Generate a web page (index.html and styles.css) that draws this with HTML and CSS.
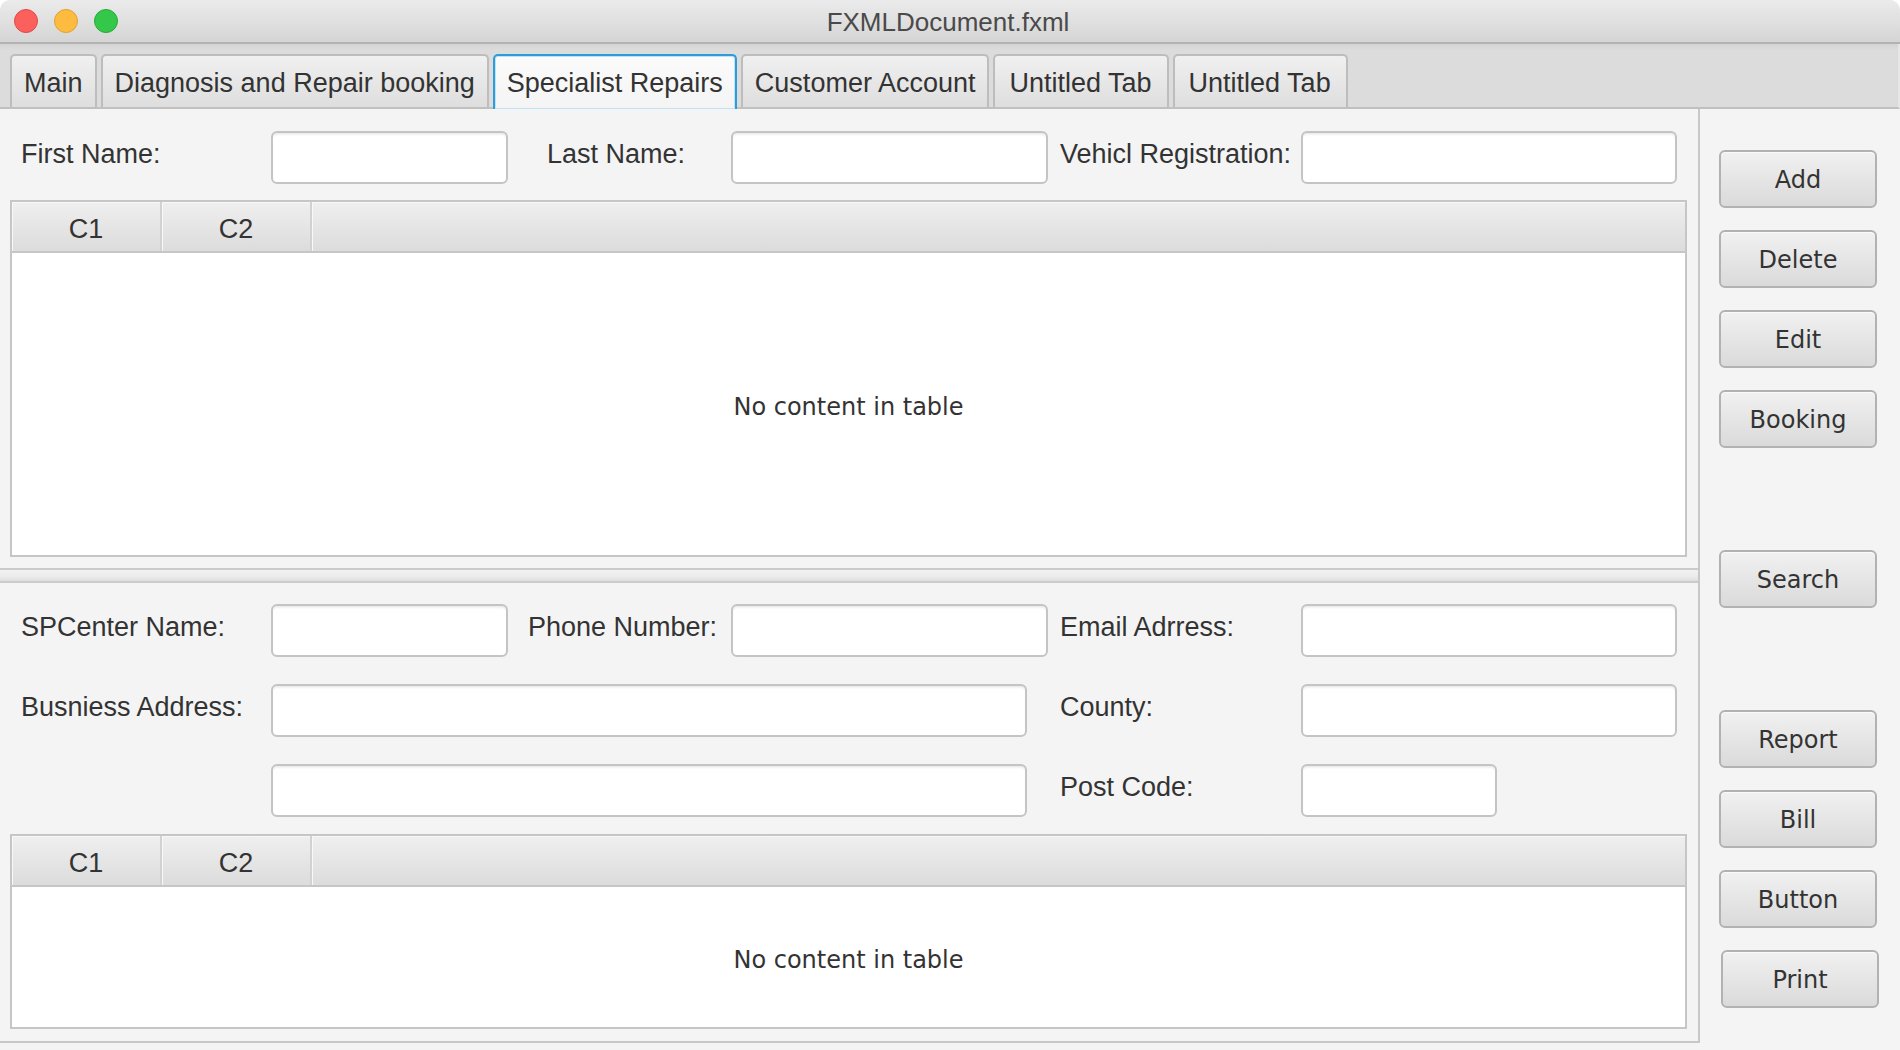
FILE: index.html
```
<!DOCTYPE html>
<html>
<head>
<meta charset="utf-8">
<title>FXMLDocument.fxml</title>
<link rel="stylesheet" href="styles.css">
</head>
<body>
<div class="window">
  <div class="titlebar">
    <div class="lights">
      <span class="light red"></span>
      <span class="light yellow"></span>
      <span class="light green"></span>
    </div>
    <div class="title">FXMLDocument.fxml</div>
  </div>
  <div class="tabbar">
    <div class="tab">Main</div>
    <div class="tab">Diagnosis and Repair booking</div>
    <div class="tab selected">Specialist Repairs</div>
    <div class="tab">Customer Account</div>
    <div class="tab tab-wide">Untitled Tab</div>
    <div class="tab tab-wide">Untitled Tab</div>
  </div>
  <div class="content">
    <div class="main-pane">
      <div class="pane top-pane">
        <div class="form">
          <label class="lbl">First Name:</label>
          <div class="field"></div>
          <label class="lbl lbl-last">Last Name:</label>
          <div class="field"></div>
          <label class="lbl lbl-right">Vehicl Registration:</label>
          <div class="field"></div>
        </div>
        <div class="table table-top">
          <div class="thead">
            <div class="th">C1</div>
            <div class="th">C2</div>
            <div class="th th-fill"></div>
          </div>
          <div class="tbody">No content in table</div>
        </div>
      </div>
      <div class="splitter"></div>
      <div class="pane bottom-pane">
        <div class="form">
          <label class="lbl">SPCenter Name:</label>
          <div class="field"></div>
          <label class="lbl lbl-phone">Phone Number:</label>
          <div class="field"></div>
          <label class="lbl lbl-right">Email Adrress:</label>
          <div class="field"></div>

          <label class="lbl">Busniess Address:</label>
          <div class="field field-address"></div>
          <label class="lbl lbl-right">County:</label>
          <div class="field"></div>

          <div class="field field-address field-address2"></div>
          <label class="lbl lbl-right">Post Code:</label>
          <div class="field field-post"></div>
        </div>
        <div class="table table-bottom">
          <div class="thead">
            <div class="th">C1</div>
            <div class="th">C2</div>
            <div class="th th-fill"></div>
          </div>
          <div class="tbody">No content in table</div>
        </div>
      </div>
    </div>
    <div class="side">
      <button class="btn">Add</button>
      <button class="btn">Delete</button>
      <button class="btn">Edit</button>
      <button class="btn">Booking</button>
      <button class="btn btn-gap">Search</button>
      <button class="btn btn-gap">Report</button>
      <button class="btn">Bill</button>
      <button class="btn">Button</button>
      <button class="btn btn-print">Print</button>
    </div>
  </div>
</div>
</body>
</html>
```

FILE: styles.css
```
* {
  box-sizing: border-box;
}

html, body {
  margin: 0;
  padding: 0;
  background: #ffffff;
}

body {
  width: 1900px;
  height: 1050px;
  overflow: hidden;
  font-family: "Liberation Sans", Arial, sans-serif;
  color: #333333;
}

.window {
  width: 1900px;
  height: 1050px;
  background: #f4f4f4;
  border-radius: 10px 10px 0 0;
  overflow: hidden;
  display: flex;
  flex-direction: column;
}

/* Title bar */
.titlebar {
  height: 44px;
  flex: 0 0 44px;
  background: linear-gradient(#ebebeb, #d5d5d5);
  border-bottom: 2px solid #b3b3b3;
  display: flex;
  align-items: center;
  position: relative;
}

.lights {
  display: flex;
  gap: 16px;
  padding-left: 14px;
}

.light {
  width: 24px;
  height: 24px;
  border-radius: 50%;
  display: block;
}

.red {
  background: #fc605c;
  border: 1px solid #de4a45;
}

.yellow {
  background: #fdbc40;
  border: 1px solid #dea236;
}

.green {
  background: #34c84a;
  border: 1px solid #27aa35;
}

.title {
  position: absolute;
  left: 0;
  right: 0;
  top: 2px;
  bottom: 0;
  display: flex;
  align-items: center;
  justify-content: center;
  font-size: 26px;
  color: #4a4a4a;
  padding-right: 4px;
}

/* Tab bar */
.tabbar {
  height: 65px;
  flex: 0 0 65px;
  background: linear-gradient(#d4d4d4, #dcdcdc 6px, #dcdcdc);
  border-bottom: 2px solid #c0c0c0;
  display: flex;
  align-items: flex-end;
  gap: 4px;
  padding-left: 10px;
  border-right: 2px solid #e6e6e6;
}

.tab {
  height: 53px;
  padding: 3px 12px 0;
  border: 2px solid #bdbdbd;
  border-bottom: none;
  border-radius: 5px 5px 0 0;
  background: linear-gradient(#f0f0f0, #dedede);
  font-size: 27px;
  color: #333333;
  display: flex;
  align-items: center;
  white-space: nowrap;
  margin-bottom: 0;
}

.tab-wide {
  padding-left: 14px;
  padding-right: 15px;
}

.tab.selected {
  background: linear-gradient(#fbfbfb, #f4f4f4);
  border: 2px solid #2f9bd8;
  border-bottom: none;
  box-shadow: inset 0 0 0 1px #bfe2f5;
  height: 55px;
  padding-bottom: 2px;
  margin-bottom: -2px;
  position: relative;
}

/* Content */
.content {
  flex: 1;
  display: flex;
}

.main-pane {
  width: 1700px;
  height: 934px;
  border-right: 2px solid #c8c8c8;
  border-bottom: 2px solid #c8c8c8;
  display: flex;
  flex-direction: column;
}

.pane {
  display: flex;
  flex-direction: column;
}

.top-pane {
  height: 459px;
  padding: 22px 11px 11px 0;
}

.bottom-pane {
  height: 458px;
  padding: 21px 11px 12px 0;
}

.splitter {
  height: 15px;
  flex: 0 0 15px;
  border-top: 2px solid #cbcbcb;
  border-bottom: 2px solid #cbcbcb;
  background: linear-gradient(#f2f2f2, #ebebeb 60%, #dedede);
}

/* Forms */
.form {
  display: grid;
  grid-template-columns: 250px 237px 223px 317px 253px 376px;
  grid-auto-rows: 53px;
  row-gap: 27px;
  padding-left: 21px;
}

.lbl {
  font-size: 27px;
  color: #333333;
  display: flex;
  align-items: center;
  white-space: nowrap;
  grid-column: 1;
  padding-bottom: 6px;
}

.lbl-last {
  grid-column: 3;
  padding-left: 39px;
}

.lbl-phone {
  grid-column: 3;
  padding-left: 20px;
}

.lbl-right {
  grid-column: 5;
  padding-left: 12px;
}

.field {
  background: #ffffff;
  border: 2px solid #c4c4c4;
  border-radius: 6px;
  box-shadow: inset 0 3px 3px -2px rgba(0, 0, 0, 0.12);
}

.field-address {
  grid-column: 2 / span 3;
  width: 756px;
}

.field-address2 {
  grid-column: 2 / span 3;
}

.field-post {
  width: 196px;
}

/* Tables */
.table {
  margin-left: 10px;
  border: 2px solid #c6c6c6;
  background: #ffffff;
  display: flex;
  flex-direction: column;
  flex: 1;
}

.table-top {
  margin-top: 16px;
}

.table-bottom {
  margin-top: 17px;
}

.thead {
  height: 51px;
  flex: 0 0 51px;
  display: flex;
  border-bottom: 2px solid #c6c6c6;
  background: linear-gradient(#efefef, #dcdcdc);
}

.th {
  width: 150px;
  border-right: 2px solid #d2d2d2;
  box-shadow: inset 1px 1px 0 #f8f8f8;
  display: flex;
  align-items: center;
  justify-content: center;
  font-size: 27px;
  color: #333333;
  padding-top: 6px;
}

.th-fill {
  flex: 1;
  border-right: none;
}

.tbody {
  flex: 1;
  display: flex;
  align-items: center;
  justify-content: center;
  font-family: "DejaVu Sans", "Liberation Sans", sans-serif;
  font-size: 24px;
  color: #333333;
  padding-top: 5px;
}

/* Side buttons */
.side {
  flex: 1;
  display: flex;
  flex-direction: column;
  align-items: flex-start;
  gap: 22px;
  padding: 41px 0 0 19px;
}

.btn {
  width: 158px;
  height: 58px;
  border: 2px solid #b2b2b2;
  border-radius: 6px;
  background: linear-gradient(#f1f1f1, #dadada);
  font-family: "DejaVu Sans", "Liberation Sans", sans-serif;
  font-size: 24px;
  color: #333333;
  padding: 2px 0 0;
  box-shadow: inset 0 1px 0 #fafafa;
}

.btn-gap {
  margin-top: 80px;
}

.btn-print {
  margin-left: 2px;
}
```
